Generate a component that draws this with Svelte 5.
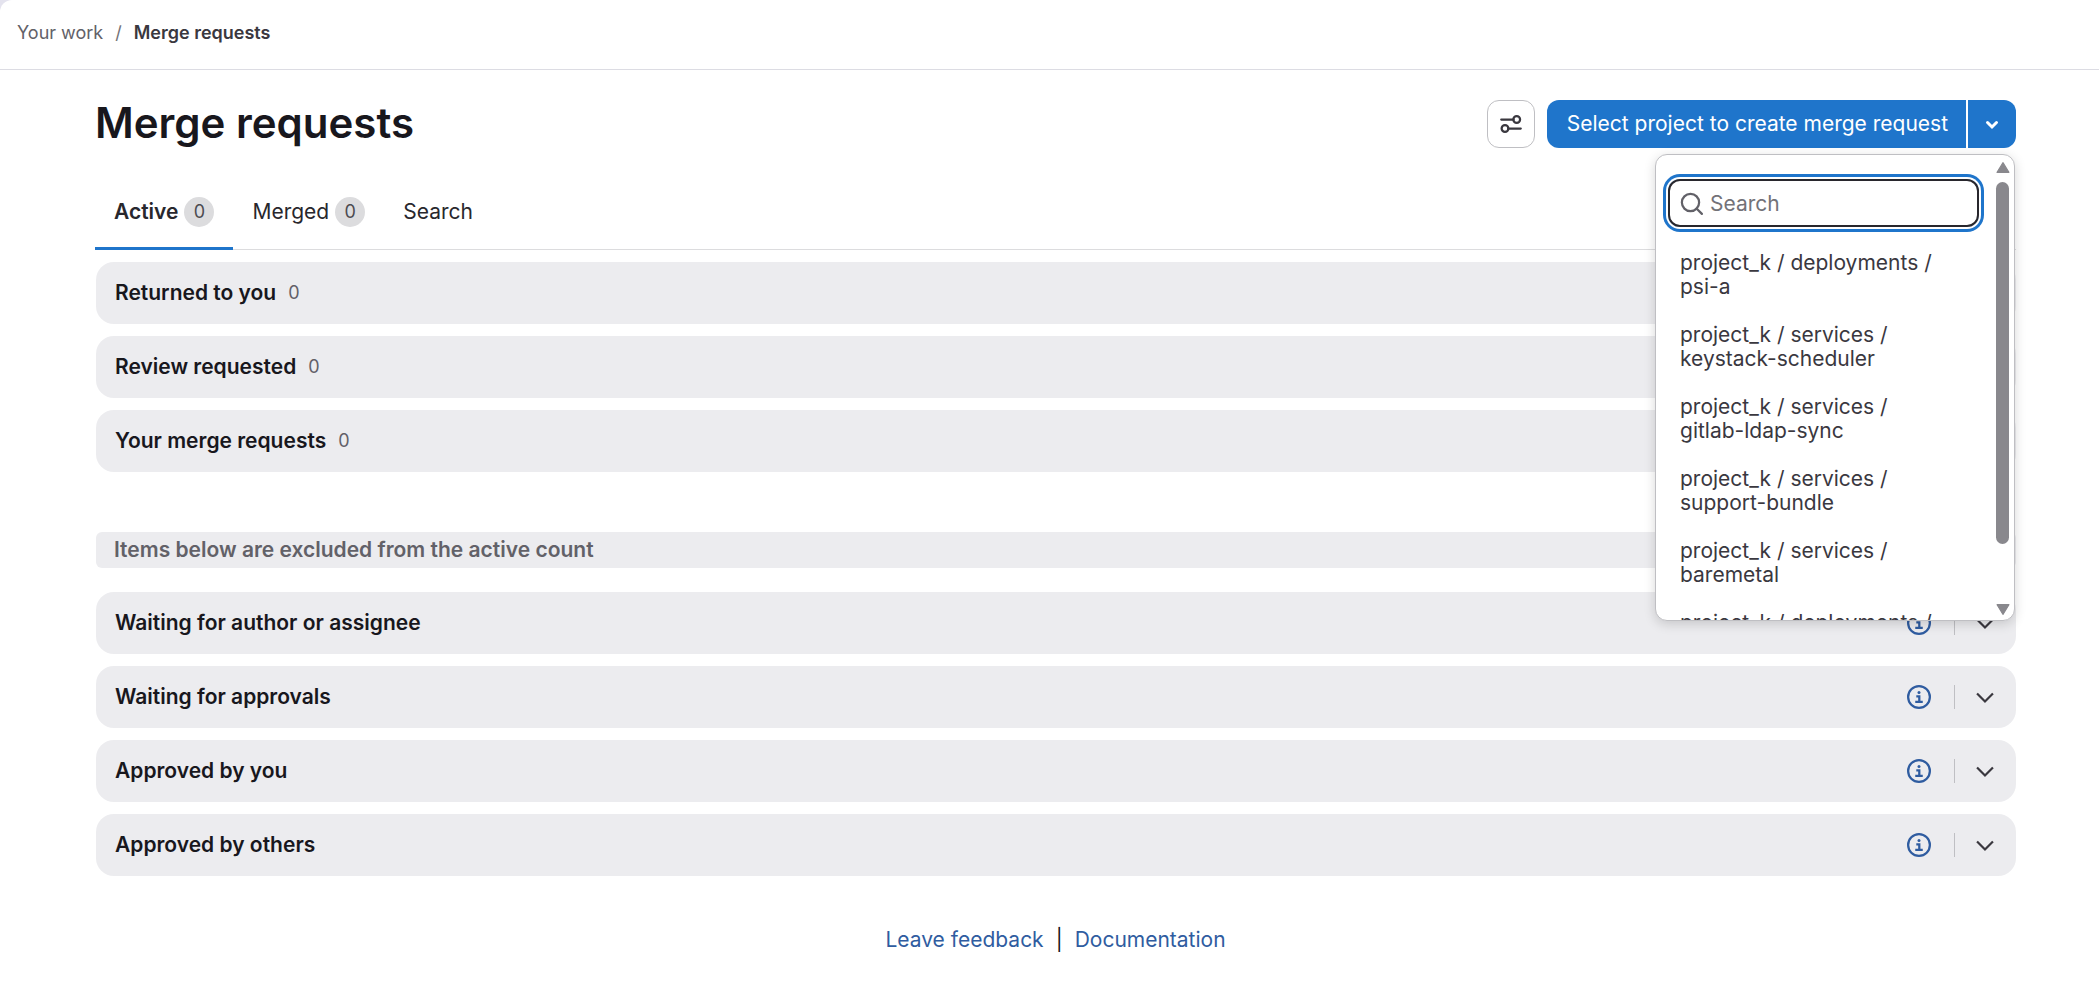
<script lang="ts">
	interface Section {
		title: string;
		count?: number;
	}

	const tabs = [
		{ label: 'Active', count: 0 },
		{ label: 'Merged', count: 0 },
		{ label: 'Search' }
	];

	const activeSections: Section[] = [
		{ title: 'Returned to you', count: 0 },
		{ title: 'Review requested', count: 0 },
		{ title: 'Your merge requests', count: 0 }
	];

	const excludedSections: Section[] = [
		{ title: 'Waiting for author or assignee' },
		{ title: 'Waiting for approvals' },
		{ title: 'Approved by you' },
		{ title: 'Approved by others' }
	];

	const projects = [
		'project_k / deployments / psi-a',
		'project_k / services / keystack-scheduler',
		'project_k / services / gitlab-ldap-sync',
		'project_k / services / support-bundle',
		'project_k / services / baremetal',
		'project_k / deployments /'
	];

	let currentTab = $state('Active');
	let open = $state(true);
	let query = $state('');
	let filtered = $derived(projects.filter((p) => p.includes(query)));
</script>

{#snippet section(item: Section)}
	<section class="card">
		<h2>{item.title}</h2>
		{#if item.count !== undefined}<span class="count">{item.count}</span>{/if}
		<div class="card-actions">
			<button class="icon-btn info" aria-label="More information">
				<svg viewBox="0 0 16 16" fill="none" stroke="currentColor" stroke-width="1.5">
					<circle cx="8" cy="8" r="7.25" />
					<path d="M6.2 7.5h2v3.7M5.5 11.2h5" />
					<circle cx="8" cy="5" r="1" fill="currentColor" stroke="none" />
				</svg>
			</button>
			<span class="divider"></span>
			<button class="icon-btn" aria-label="Expand {item.title}">
				<svg viewBox="0 0 16 16" fill="none" stroke="currentColor" stroke-width="1.5">
					<path d="M2.7 5.7 8 11l5.3-5.3" />
				</svg>
			</button>
		</div>
	</section>
{/snippet}

<div class="panel">
	<header class="top-bar">
		<nav aria-label="Breadcrumb">
			<a href="#work">Your work</a>
			<span class="slash">/</span>
			<a href="#mrs" class="current" aria-current="page">Merge requests</a>
		</nav>
	</header>

	<main>
		<div class="page-heading">
			<h1>Merge requests</h1>
			<div class="actions">
				<button class="prefs" aria-label="Display preferences">
					<svg viewBox="0 0 16 16" fill="none" stroke="currentColor" stroke-width="1.5">
						<circle cx="11.8" cy="5" r="2.25" />
						<circle cx="4" cy="11" r="2.25" />
						<path d="M1.5 5h8.2M6.2 11h8.3" stroke-linecap="round" />
					</svg>
				</button>
				<div class="split">
					<button class="primary">Select project to create merge request</button>
					<button class="primary caret" aria-label="Toggle project select" aria-expanded={open} onclick={() => (open = !open)}>
						<svg viewBox="0 0 16 16" fill="none" stroke="currentColor" stroke-width="2">
							<path d="m5 7 3 3 3-3" stroke-linecap="round" />
						</svg>
					</button>
					{#if open}
						<div class="dropdown">
							<div class="dropdown-body">
								<label class="search">
									<svg viewBox="0 0 16 16" fill="none" stroke="currentColor" stroke-width="1.5">
										<circle cx="7" cy="7" r="5.75" />
										<path d="m11 11 3.6 3.6" stroke-linecap="round" />
									</svg>
									<input type="text" placeholder="Search" aria-label="Search projects" bind:value={query} />
								</label>
								<ul>
									{#each filtered as project}
										<li><button>{project}</button></li>
									{/each}
								</ul>
							</div>
							<div class="scrollbar" aria-hidden="true">
								<svg viewBox="0 0 14 12"><path d="M7 1.5 12.5 10.5h-11z" /></svg>
								<div class="track"><div class="thumb"></div></div>
								<svg viewBox="0 0 14 12"><path d="M7 10.5 1.5 1.5h11z" /></svg>
							</div>
						</div>
					{/if}
				</div>
			</div>
		</div>

		<div class="tabs" role="tablist">
			{#each tabs as tab}
				<button role="tab" class:active={currentTab === tab.label} aria-selected={currentTab === tab.label} onclick={() => (currentTab = tab.label)}>
					{tab.label}
					{#if tab.count !== undefined}<span class="badge">{tab.count}</span>{/if}
				</button>
			{/each}
		</div>

		<div class="list">
			{#each activeSections as item}{@render section(item)}{/each}
		</div>
		<p class="notice">Items below are excluded from the active count</p>
		<div class="list">
			{#each excludedSections as item}{@render section(item)}{/each}
		</div>

		<footer>
			<a href="#feedback">Leave feedback</a>
			<span class="bar">|</span>
			<a href="#docs">Documentation</a>
		</footer>
	</main>
</div>

<style>
	:global(body) {
		background: #e4e3ee; color: #18171d;
		font-family: Inter, "Liberation Sans", sans-serif;
		font-size: 21px; line-height: 30px;
	}
	button, input { font: inherit; color: inherit; }
	button {
		padding: 0; border: none; background: none; cursor: pointer;
	}
	h1, h2, p, ul { margin: 0; padding: 0; }
	a { text-decoration: none; }
	svg { display: block; width: 24px; height: 24px; flex: none; }

	.panel {
		min-height: 100vh;
		background: #fff; border-top-left-radius: 12px;
	}
	.top-bar {
		display: flex; align-items: center;
		box-sizing: border-box; height: 70px;
		padding: 0 17px 4px;
		border-bottom: 1px solid #dcdce3;
	}
	nav { display: flex; gap: 12px; font-size: 18px; line-height: 24px; }
	nav a { color: #626168; }
	nav .current { color: #3a383f; font-weight: 600; }
	.slash { color: #737278; }

	main { padding: 30px 83px 36px 95px; }
	.page-heading {
		display: flex; justify-content: space-between; align-items: flex-start;
	}
	h1 { font-size: 42px; line-height: 46px; font-weight: 600; }
	.actions { display: flex; gap: 12px; }
	.prefs {
		display: grid; place-items: center;
		width: 48px; height: 48px;
		border: 1px solid #bfbfc3; border-radius: 12px; color: #3a383f;
	}
	.split { position: relative; display: flex; gap: 2px; }
	.primary {
		height: 48px; padding: 0 18px 0 20px;
		background: #1f75cb; color: #fff;
		border-radius: 12px 0 0 12px;
	}
	.caret { padding: 0 12px; border-radius: 0 12px 12px 0; }

	.dropdown {
		position: absolute; top: 54px; right: 1px; z-index: 10;
		display: flex; box-sizing: border-box;
		width: 360px; height: 467px; overflow: hidden;
		background: #fff; border: 1px solid #bfbfc3; border-radius: 12px;
		box-shadow: 0 3px 12px rgba(5,5,6,.16);
	}
	.dropdown-body { flex: 1; padding: 24px 0 0 12px; overflow: hidden; }
	.search {
		display: flex; align-items: center; gap: 6px;
		box-sizing: border-box; height: 48px;
		margin-right: 12px; padding: 1px 10px 0;
		border: 2px solid #28272d; border-radius: 12px;
		box-shadow: 0 0 0 2px #fff, 0 0 0 5px #1f75cb;
		color: #626168;
	}
	.search input {
		flex: 1; min-width: 0; padding: 0;
		border: none; outline: none; background: none;
	}
	.search input::placeholder { color: #737278; opacity: 1; }
	ul { list-style: none; padding-top: 12px; }
	li button {
		width: 100%; padding: 12px 48px 12px 12px;
		font-size: 21px; line-height: 24px;
		color: #3a383f; text-align: left;
	}
	.scrollbar {
		display: flex; flex-direction: column; align-items: center;
		width: 23px; padding: 6px 0 4px;
	}
	.scrollbar svg {
		width: 16px; height: 13px;
		fill: #89888d; stroke: #89888d; stroke-linejoin: round;
	}
	.track { flex: 1; padding: 8px 0; }
	.thumb { width: 13px; height: 362px; border-radius: 7px; background: #89888d; }

	.tabs { display: flex; margin-top: 28px; box-shadow: inset 0 -1px #dcdcde; }
	.tabs button {
		display: flex; align-items: center; gap: 6px;
		height: 74px; padding: 0 19px 3px;
		color: #28272d;
	}
	.tabs .active { font-weight: 600; box-shadow: inset 0 -3px #1f75cb; }
	.badge {
		width: 30px; border-radius: 15px;
		background: #dcdcde; color: #4c4b51;
		font-size: 18px; font-weight: 400;
	}

	.list { display: grid; gap: 12px; margin: 12px 0 0 1px; }
	.card {
		display: flex; align-items: center; gap: 12px;
		height: 62px; padding: 0 19px;
		background: #ececef; border-radius: 18px;
	}
	h2 { font-size: 21px; line-height: 30px; font-weight: 600; }
	.count { font-size: 18px; color: #626168; }
	.card-actions { display: flex; align-items: center; margin-left: auto; }
	.icon-btn { color: #3a383f; }
	.info { color: #2f5ca0; }
	.divider { width: 1px; height: 24px; margin: 0 18px 0 23px; background: #bfbfc3; }

	.notice {
		margin: 60px 0 24px 1px; padding: 3px 18px;
		background: #ececef; color: #626168;
		border-radius: 6px; font-weight: 600;
	}

	footer { display: flex; justify-content: center; gap: 12px; margin-top: 49px; }
	footer a { color: #2f5ca0; }
</style>
